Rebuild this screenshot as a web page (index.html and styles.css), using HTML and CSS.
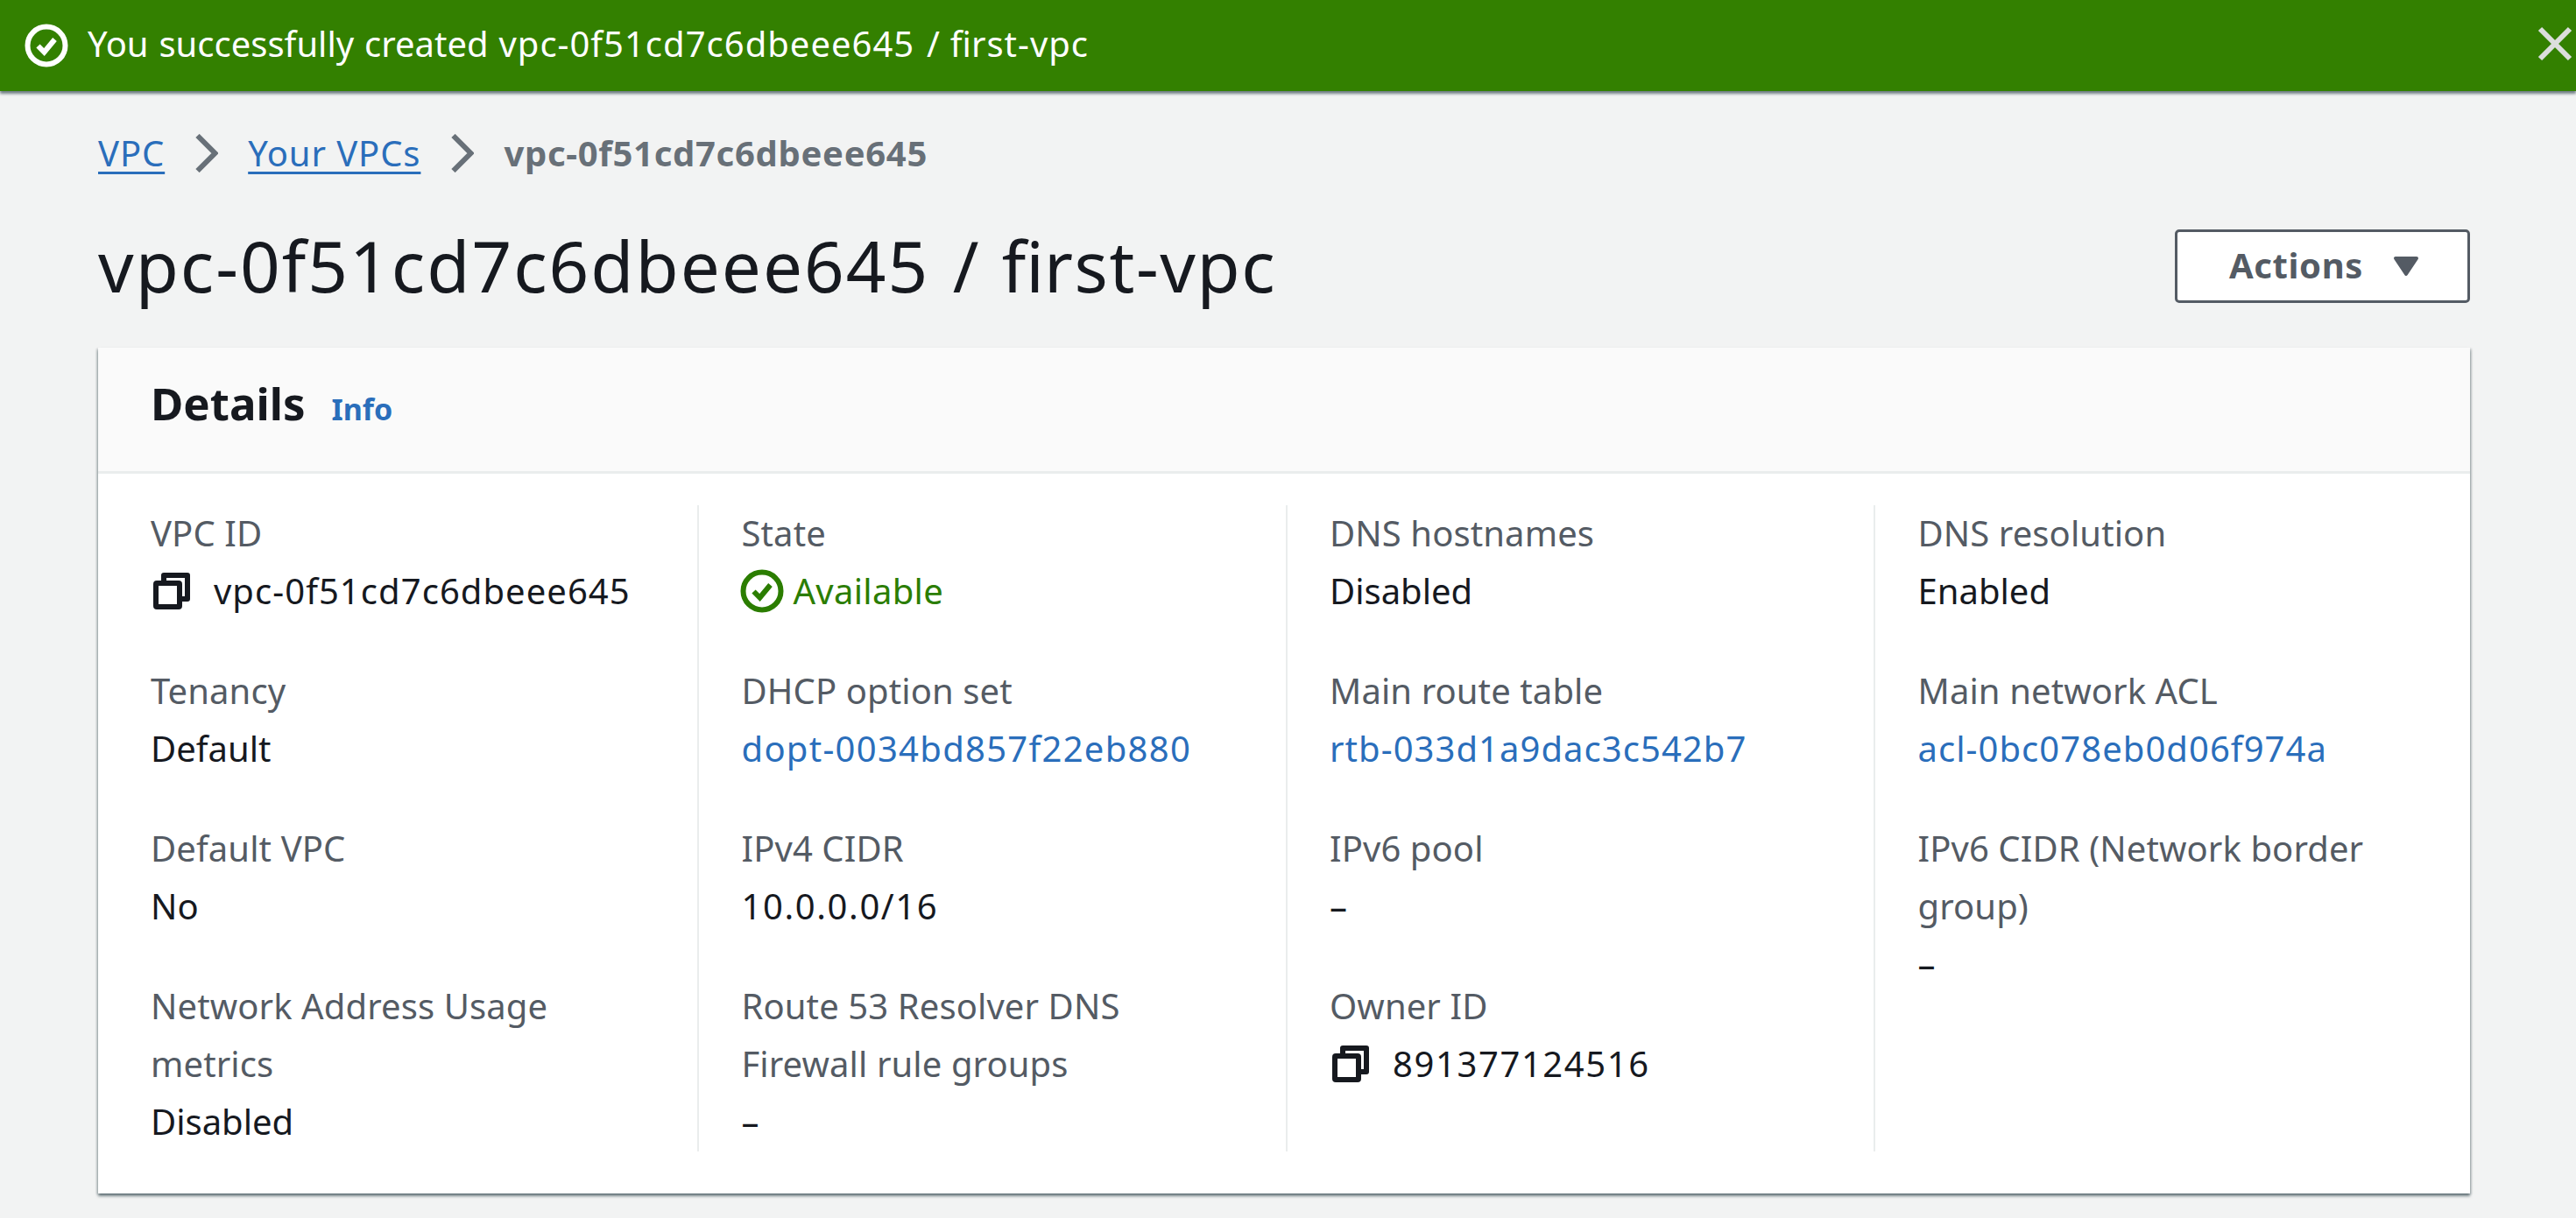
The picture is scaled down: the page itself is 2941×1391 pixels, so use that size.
FILE: index.html
```html
<!DOCTYPE html>
<html lang="en">
<head>
    <meta charset="UTF-8">
    <title>vpc-0f51cd7c6dbeee645 / first-vpc</title>
    <link rel="stylesheet" href="styles.css">
</head>
<body>
    <div class="flash">
        <svg class="flash-icon" viewBox="0 0 50 50"><circle cx="25" cy="25" r="21.500" fill="none" stroke="#fff" stroke-width="6"/><path d="M15.500 25.500l7 7 12-14.500" fill="none" stroke="#fff" stroke-width="6"/></svg>
        <span class="flash-text">You successfully created <span class="flash-id">vpc-0f51cd7c6dbeee645</span> / fi<span class="flash-rest">rst-vpc</span></span>
        <svg class="flash-close" viewBox="0 0 40 40"><path d="M3 3l34 34M37 3L3 37" fill="none" stroke="#dcdedd" stroke-width="6"/></svg>
    </div>

    <div class="content">
        <nav class="crumbs">
            <a href="#">VPC</a>
            <svg class="crumb-sep" viewBox="0 0 27 44"><path d="M3.500 2l20 20-20 20" fill="none" stroke="#687078" stroke-width="6"/></svg>
            <a href="#">Your VPCs</a>
            <svg class="crumb-sep" viewBox="0 0 27 44"><path d="M3.500 2l20 20-20 20" fill="none" stroke="#687078" stroke-width="6"/></svg>
            <span class="crumb-current">vpc-0f51cd7c6dbeee645</span>
        </nav>

        <div class="page-head">
            <h1><span class="title-id">vpc-0f51cd7c6dbeee645</span> / fi<span class="title-rest">rst-vpc</span></h1>
            <button class="actions"><span class="actions-text">Actions</span> <svg class="caret" viewBox="0 0 30 24"><path d="M3 3h24L15 21z" fill="#545b64" stroke="#545b64" stroke-width="4" stroke-linejoin="round"/></svg></button>
        </div>

        <div class="card">
            <div class="card-head">
                <h2>Details</h2>
                <a class="info" href="#">Info</a>
            </div>
            <div class="card-body">
                <div class="col">
                    <div class="item">
                        <div class="label">VPC ID</div>
                        <div class="value with-icon">
                            <svg class="copy" viewBox="0 0 42 42"><path d="M12 9V3h27v27h-7" fill="none" stroke="#16191f" stroke-width="6" stroke-linejoin="round"/><rect x="3" y="12" width="27" height="27" rx="1" fill="none" stroke="#16191f" stroke-width="6"/></svg>
                            <span class="id">vpc-0f51cd7c6dbeee645</span>
                        </div>
                    </div>
                    <div class="item">
                        <div class="label">Tenancy</div>
                        <div class="value">Default</div>
                    </div>
                    <div class="item">
                        <div class="label">Default VPC</div>
                        <div class="value">No</div>
                    </div>
                    <div class="item">
                        <div class="label">Network Address Usage metrics</div>
                        <div class="value">Disabled</div>
                    </div>
                </div>
                <div class="col">
                    <div class="item">
                        <div class="label">State</div>
                        <div class="value status">
                            <svg class="status-icon" viewBox="0 0 50 50"><circle cx="25" cy="25" r="21.500" fill="none" stroke="#2b7d00" stroke-width="6"/><path d="M15.500 25.500l7 7 12-14.500" fill="none" stroke="#2b7d00" stroke-width="6"/></svg>
                            Available
                        </div>
                    </div>
                    <div class="item">
                        <div class="label">DHCP option set</div>
                        <div class="value"><a class="id-long" href="#">dopt-0034bd857f22eb880</a></div>
                    </div>
                    <div class="item">
                        <div class="label">IPv4 CIDR</div>
                        <div class="value num">10.0.0.0/16</div>
                    </div>
                    <div class="item">
                        <div class="label">Route 53 Resolver DNS Firewall rule groups</div>
                        <div class="value">–</div>
                    </div>
                </div>
                <div class="col">
                    <div class="item">
                        <div class="label">DNS hostnames</div>
                        <div class="value">Disabled</div>
                    </div>
                    <div class="item">
                        <div class="label">Main route table</div>
                        <div class="value"><a class="id" href="#">rtb-033d1a9dac3c542b7</a></div>
                    </div>
                    <div class="item">
                        <div class="label">IPv6 pool</div>
                        <div class="value">–</div>
                    </div>
                    <div class="item">
                        <div class="label">Owner ID</div>
                        <div class="value with-icon">
                            <svg class="copy" viewBox="0 0 42 42"><path d="M12 9V3h27v27h-7" fill="none" stroke="#16191f" stroke-width="6" stroke-linejoin="round"/><rect x="3" y="12" width="27" height="27" rx="1" fill="none" stroke="#16191f" stroke-width="6"/></svg>
                            <span class="num">891377124516</span>
                        </div>
                    </div>
                </div>
                <div class="col">
                    <div class="item">
                        <div class="label">DNS resolution</div>
                        <div class="value">Enabled</div>
                    </div>
                    <div class="item">
                        <div class="label">Main network ACL</div>
                        <div class="value"><a class="id" href="#">acl-0bc078eb0d06f974a</a></div>
                    </div>
                    <div class="item">
                        <div class="label">IPv6 CIDR (Network border group)</div>
                        <div class="value">–</div>
                    </div>
                </div>
            </div>
        </div>
    </div>
</body>
</html>
```

FILE: styles.css
```css
body {
    margin: 0;
    background-color: #f2f3f3;
    color: #16191f;
    font-family: "Noto Sans", sans-serif;
    font-size: 40px;
    line-height: 66px;
}
a {
    color: #2a6ebb;
    text-decoration: none;
}

.flash {
    display: flex;
    align-items: center;
    height: 104px;
    padding-left: 28px;
    padding-right: 4px;
    background-color: #338000;
    color: white;
    box-shadow: 0 3px 3px rgba(0,28,36,0.55);
}
.flash-icon {
    width: 50px;
    height: 50px;
    margin-right: 22px;
}
.flash-text {
    flex: 1;
    margin-top: -4px;
    word-spacing: 1.5px;
}
.flash-id {
    margin-right: 2px;
    letter-spacing: 1px;
}
.flash-rest {
    letter-spacing: 1px;
}
.flash-close {
    width: 40px;
    height: 40px;
    margin-top: -5px;
}

.content {
    padding: 0 121px 28px 112px;
}

.crumbs {
    display: flex;
    align-items: center;
    height: 66px;
    margin-top: 38px;
    letter-spacing: 0.9px;
}
.crumbs a {
    text-decoration: underline;
    text-decoration-thickness: 3px;
    text-underline-offset: 6px;
}
.crumb-sep {
    width: 27px;
    height: 44px;
    margin: 0 34px;
}
.crumb-current {
    color: #687078;
    font-weight: 700;
    letter-spacing: 0.7px;
}

.page-head {
    display: flex;
    align-items: center;
    justify-content: space-between;
    height: 84px;
    margin-top: 54px;
}
h1 {
    margin: 0 0 2px;
    font-size: 80px;
    font-weight: 400;
    line-height: 84px;
    word-spacing: 5.5px;
}
.title-id {
    letter-spacing: 2px;
}
.title-rest {
    letter-spacing: 1.6px;
}
.actions {
    display: flex;
    align-items: center;
    gap: 34px;
    box-sizing: border-box;
    width: 337px;
    height: 84px;
    padding: 0 0 0 59px;
    border: 3px solid #545b64;
    border-radius: 5px;
    background-color: white;
    color: #545b64;
    font-family: "Noto Sans", sans-serif;
    font-size: 40px;
    font-weight: 700;
    letter-spacing: 0.6px;
}
.actions-text {
    margin-top: -3px;
}
.caret {
    width: 30px;
    height: 24px;
}

.card {
    margin-top: 51px;
    background-color: white;
    box-shadow: 0 3px 3px rgba(0,28,36,0.5), 2px 1px 2px rgba(0,28,36,0.14), -2px 1px 2px rgba(0,28,36,0.14);
}
.card-head {
    display: flex;
    align-items: baseline;
    gap: 30px;
    height: 144px;
    box-sizing: border-box;
    padding: 30px 60px 0;
    background-color: #fafafa;
    border-bottom: 3px solid #eaeded;
}
h2 {
    margin: 0;
    font-size: 51px;
    font-weight: 700;
}
.info {
    font-size: 34px;
    font-weight: 700;
}

.card-body {
    display: grid;
    grid-template-columns: repeat(4, 671.5px);
    height: 738px;
    padding: 36px 0 48px 12.5px;
}
.col {
    padding: 0 40px 0 48.5px;
    border-left: 2px solid #eaeded;
}
.col:first-child {
    padding-left: 47.5px;
    border-left: none;
}
.item {
    margin-bottom: 48px;
}
.item:first-child {
    margin-top: -1px;
}
.item:last-child {
    margin-bottom: 0;
}
.label {
    color: #545b64;
    letter-spacing: 0.1px;
}
.with-icon {
    display: flex;
    align-items: center;
    gap: 27px;
}
.id {
    letter-spacing: 1.05px;
}
.id-long {
    letter-spacing: 1.28px;
}
.num {
    letter-spacing: 1.6px;
}
.copy {
    width: 42px;
    height: 42px;
    margin-left: 3px;
}
.status {
    display: flex;
    align-items: center;
    gap: 11px;
    color: #2b7d00;
    letter-spacing: 0.3px;
}
.status-icon {
    width: 50px;
    height: 50px;
    margin-left: -2px;
}
```
